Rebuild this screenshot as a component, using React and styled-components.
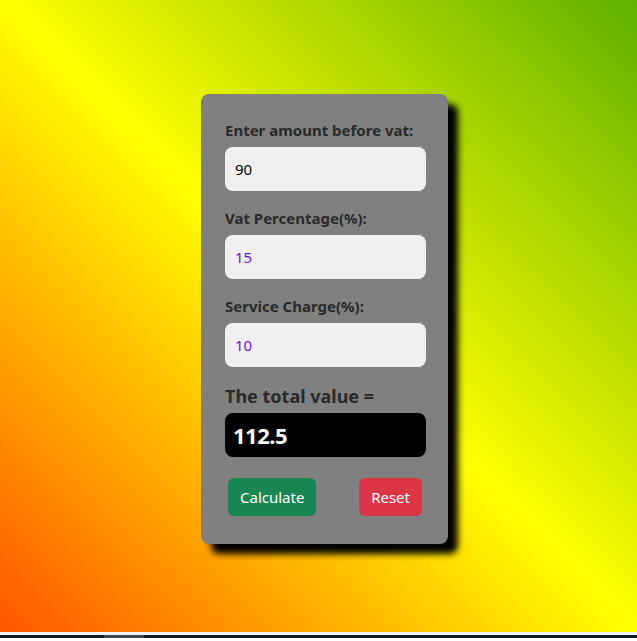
import React, { useState } from 'react';
import styled, { createGlobalStyle } from 'styled-components';

const GlobalStyle = createGlobalStyle`
    html, body {
        margin: 0;
        padding: 0;
        background: #ffffff;
    }
    body {
        font-family: "Noto Sans", "Open Sans", sans-serif;
        color: #212529;
    }
    * {
        box-sizing: border-box;
    }
`;

function App() {
    const [amount, setAmount] = useState('90');
    const [vat, setVat] = useState('15');
    const [service, setService] = useState('10');
    const [total, setTotal] = useState(112.5);

    const calculate = () => {
        const a = parseFloat(amount) || 0;
        const v = parseFloat(vat) || 0;
        const s = parseFloat(service) || 0;
        setTotal(a + (a * v) / 100 + (a * s) / 100);
    };

    const reset = () => {
        setAmount('');
        setVat('');
        setService('');
        setTotal(0);
    };

    return (
        <>
            <GlobalStyle />
            <Page>
                <Card>
                    <Field>
                        <Label>Enter amount before vat:</Label>
                        <Input value={amount} onChange={(e) => setAmount(e.target.value)} />
                    </Field>
                    <Field>
                        <Label>Vat Percentage(%):</Label>
                        <Input $accent value={vat} onChange={(e) => setVat(e.target.value)} />
                    </Field>
                    <Field>
                        <Label>Service Charge(%):</Label>
                        <Input $accent value={service} onChange={(e) => setService(e.target.value)} />
                    </Field>
                    <TotalTitle>The total value =</TotalTitle>
                    <TotalBox>{total}</TotalBox>
                    <ButtonRow>
                        <Button $color="#198754" onClick={calculate}>Calculate</Button>
                        <Button $color="#dc3545" onClick={reset}>Reset</Button>
                    </ButtonRow>
                </Card>
            </Page>
            <Footer>
                <FooterThumb />
            </Footer>
        </>
    );
}

const Page = styled.div`
    height: 635px;
    background: linear-gradient(to top right, #ff5500 0%, #ffff00 50%, #5fb000 100%);
    display: flex;
    justify-content: center;
    align-items: flex-start;
    padding-top: 94px;
    border-bottom: 3px solid #f2f2f2;
`;

const Card = styled.div`
    width: 247px;
    margin-left: 12px;
    background: #808080;
    border-radius: 8px;
    padding: 24px 22px 28px 24px;
    box-shadow: 10px 10px 7px #000000;
    display: flex;
    flex-direction: column;
`;

const Field = styled.div`
    display: flex;
    flex-direction: column;
    gap: 5px;
    margin-bottom: 15px;
`;

const Label = styled.label`
    font-size: 15px;
    font-weight: 700;
    line-height: 24px;
    color: #2a2a2a;
`;

const Input = styled.input`
    height: 44px;
    width: 100%;
    border: none;
    outline: none;
    border-radius: 8px;
    background: #f0f0f3;
    padding: 0 10px;
    font-family: "Noto Sans", sans-serif;
    font-size: 15px;
    color: ${(p) => (p.$accent ? '#7010d8' : '#000000')};
`;

const TotalTitle = styled.div`
    font-size: 18px;
    font-weight: 700;
    line-height: 28px;
    color: #2a2a2a;
    margin-bottom: 3px;
`;

const TotalBox = styled.div`
    height: 44px;
    flex-shrink: 0;
    background: #000000;
    border-radius: 8px;
    color: #ffffff;
    font-size: 22px;
    font-weight: 700;
    letter-spacing: -0.5px;
    display: flex;
    align-items: center;
    padding: 0 8px;
`;

const ButtonRow = styled.div`
    display: flex;
    justify-content: space-between;
    margin-top: 21px;
    padding: 0 4px 0 3px;
`;

const Button = styled.button`
    height: 38px;
    padding: 0 12px;
    border: none;
    border-radius: 6px;
    background: ${(p) => p.$color};
    color: #ffffff;
    font-family: "Noto Sans", sans-serif;
    font-size: 15px;
    cursor: pointer;
`;

const Footer = styled.div`
    height: 3px;
    background: #0b1a24;
    position: relative;
`;

const FooterThumb = styled.div`
    position: absolute;
    left: 104px;
    top: 0;
    width: 40px;
    height: 3px;
    background: #37474f;
`;

export default App;
